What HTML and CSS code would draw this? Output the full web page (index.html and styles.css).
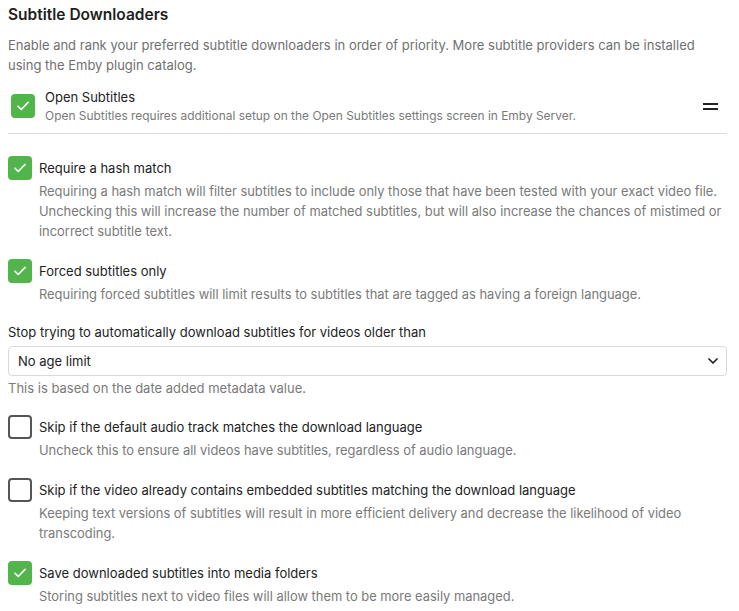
FILE: index.html
```html
<!DOCTYPE html>
<html>
<head>
<meta charset="utf-8">
<link rel="stylesheet" href="styles.css">
</head>
<body>
<div class="page">
  <h2 class="title">Subtitle Downloaders</h2>
  <p class="intro">Enable and rank your preferred subtitle downloaders in order of priority. More subtitle providers can be installed using the Emby plugin catalog.</p>

  <div class="provider">
    <span class="box checked"><svg viewBox="0 0 24 24"><path d="M6 12.3l3.9 3.9 8.2-8.6" fill="none" stroke="#fff" stroke-width="2" stroke-linecap="round" stroke-linejoin="round"/></svg></span>
    <div class="provider-text">
      <div class="provider-name">Open Subtitles</div>
      <div class="provider-desc">Open Subtitles requires additional setup on the Open Subtitles settings screen in Emby Server.</div>
    </div>
    <svg class="drag" viewBox="0 0 15 7"><rect x="0" y="0" width="15" height="2" fill="#222"/><rect x="0" y="5" width="15" height="2" fill="#222"/></svg>
  </div>

  <div class="option first">
    <div class="option-row">
      <span class="box checked"><svg viewBox="0 0 24 24"><path d="M6 12.3l3.9 3.9 8.2-8.6" fill="none" stroke="#fff" stroke-width="2" stroke-linecap="round" stroke-linejoin="round"/></svg></span>
      <span class="label">Require a hash match</span>
    </div>
    <div class="desc">Requiring a hash match will filter subtitles to include only those that have been tested with your exact video file. Unchecking this will increase the number of matched subtitles, but will also increase the chances of mistimed or incorrect subtitle text.</div>
  </div>

  <div class="option">
    <div class="option-row">
      <span class="box checked"><svg viewBox="0 0 24 24"><path d="M6 12.3l3.9 3.9 8.2-8.6" fill="none" stroke="#fff" stroke-width="2" stroke-linecap="round" stroke-linejoin="round"/></svg></span>
      <span class="label">Forced subtitles only</span>
    </div>
    <div class="desc">Requiring forced subtitles will limit results to subtitles that are tagged as having a foreign language.</div>
  </div>

  <div class="field">
    <div class="field-label">Stop trying to automatically download subtitles for videos older than</div>
    <div class="select">
      <span>No age limit</span>
      <svg class="chev" viewBox="0 0 10 6"><path d="M1 1l4 4 4-4" fill="none" stroke="#222" stroke-width="1.7" stroke-linecap="round" stroke-linejoin="round"/></svg>
    </div>
    <div class="field-help">This is based on the date added metadata value.</div>
  </div>

  <div class="option">
    <div class="option-row">
      <span class="box"></span>
      <span class="label">Skip if the default audio track matches the download language</span>
    </div>
    <div class="desc">Uncheck this to ensure all videos have subtitles, regardless of audio language.</div>
  </div>

  <div class="option">
    <div class="option-row">
      <span class="box"></span>
      <span class="label">Skip if the video already contains embedded subtitles matching the download language</span>
    </div>
    <div class="desc">Keeping text versions of subtitles will result in more efficient delivery and decrease the likelihood of video transcoding.</div>
  </div>

  <div class="option">
    <div class="option-row">
      <span class="box checked"><svg viewBox="0 0 24 24"><path d="M6 12.3l3.9 3.9 8.2-8.6" fill="none" stroke="#fff" stroke-width="2" stroke-linecap="round" stroke-linejoin="round"/></svg></span>
      <span class="label">Save downloaded subtitles into media folders</span>
    </div>
    <div class="desc">Storing subtitles next to video files will allow them to be more easily managed.</div>
  </div>
</div>
</body>
</html>
```

FILE: styles.css
```css
html, body {
  margin: 0;
  padding: 0;
  background: #fff;
}
body {
  font-family: Inter, "Noto Sans", sans-serif;
  color: #222;
}
.page {
  padding: 0 12px 0 8px;
}
.title {
  font-size: 15.5px;
  font-weight: 600;
  margin: 0;
  padding-top: 5px;
  line-height: 20px;
  color: #1e1e1e;
}
.intro {
  margin: 10px 0 0 0;
  font-size: 13px;
  line-height: 20px;
  color: #707070;
}
.provider {
  display: flex;
  align-items: center;
  margin-top: 12px;
  padding: 0 0 8px 3px;
  border-bottom: 1px solid #dcdcdc;
}
.provider .box {
  margin-right: 10px;
}
.provider-text {
  flex: 1;
}
.provider-name {
  font-size: 13px;
  line-height: 20px;
  color: #222;
}
.provider-desc {
  font-size: 11.95px;
  line-height: 18px;
  color: #7a7a7a;
}
.drag {
  width: 15px;
  height: 7px;
  margin-right: 9px;
}
.box {
  box-sizing: border-box;
  width: 24px;
  height: 24px;
  border-radius: 4px;
  border: 2px solid #555;
  flex: none;
  display: inline-flex;
  align-items: center;
  justify-content: center;
}
.box.checked {
  background: #52b54b;
  border-color: #52b54b;
}
.box svg {
  width: 22px;
  height: 22px;
}
.option {
  margin-top: 17px;
}
.option.first {
  margin-top: 22px;
}
.option-row {
  display: flex;
  align-items: center;
  gap: 7px;
}
.label {
  font-size: 13px;
  color: #222;
}
.desc {
  margin-left: 31px;
  margin-top: 2px;
  font-size: 12.9px;
  line-height: 20px;
  color: #7a7a7a;
}
.field {
  margin-top: 18px;
}
.field-label {
  font-size: 13px;
  line-height: 18px;
  color: #222;
}
.select {
  margin-top: 5px;
  box-sizing: border-box;
  height: 30px;
  border: 1px solid #dadada;
  border-radius: 4px;
  display: flex;
  align-items: center;
  justify-content: space-between;
  padding: 0 8px 0 9px;
  font-size: 13px;
  color: #222;
}
.chev {
  width: 10px;
  height: 6px;
}
.field-help {
  margin-top: 2px;
  font-size: 13px;
  line-height: 20px;
  color: #7a7a7a;
}
```
